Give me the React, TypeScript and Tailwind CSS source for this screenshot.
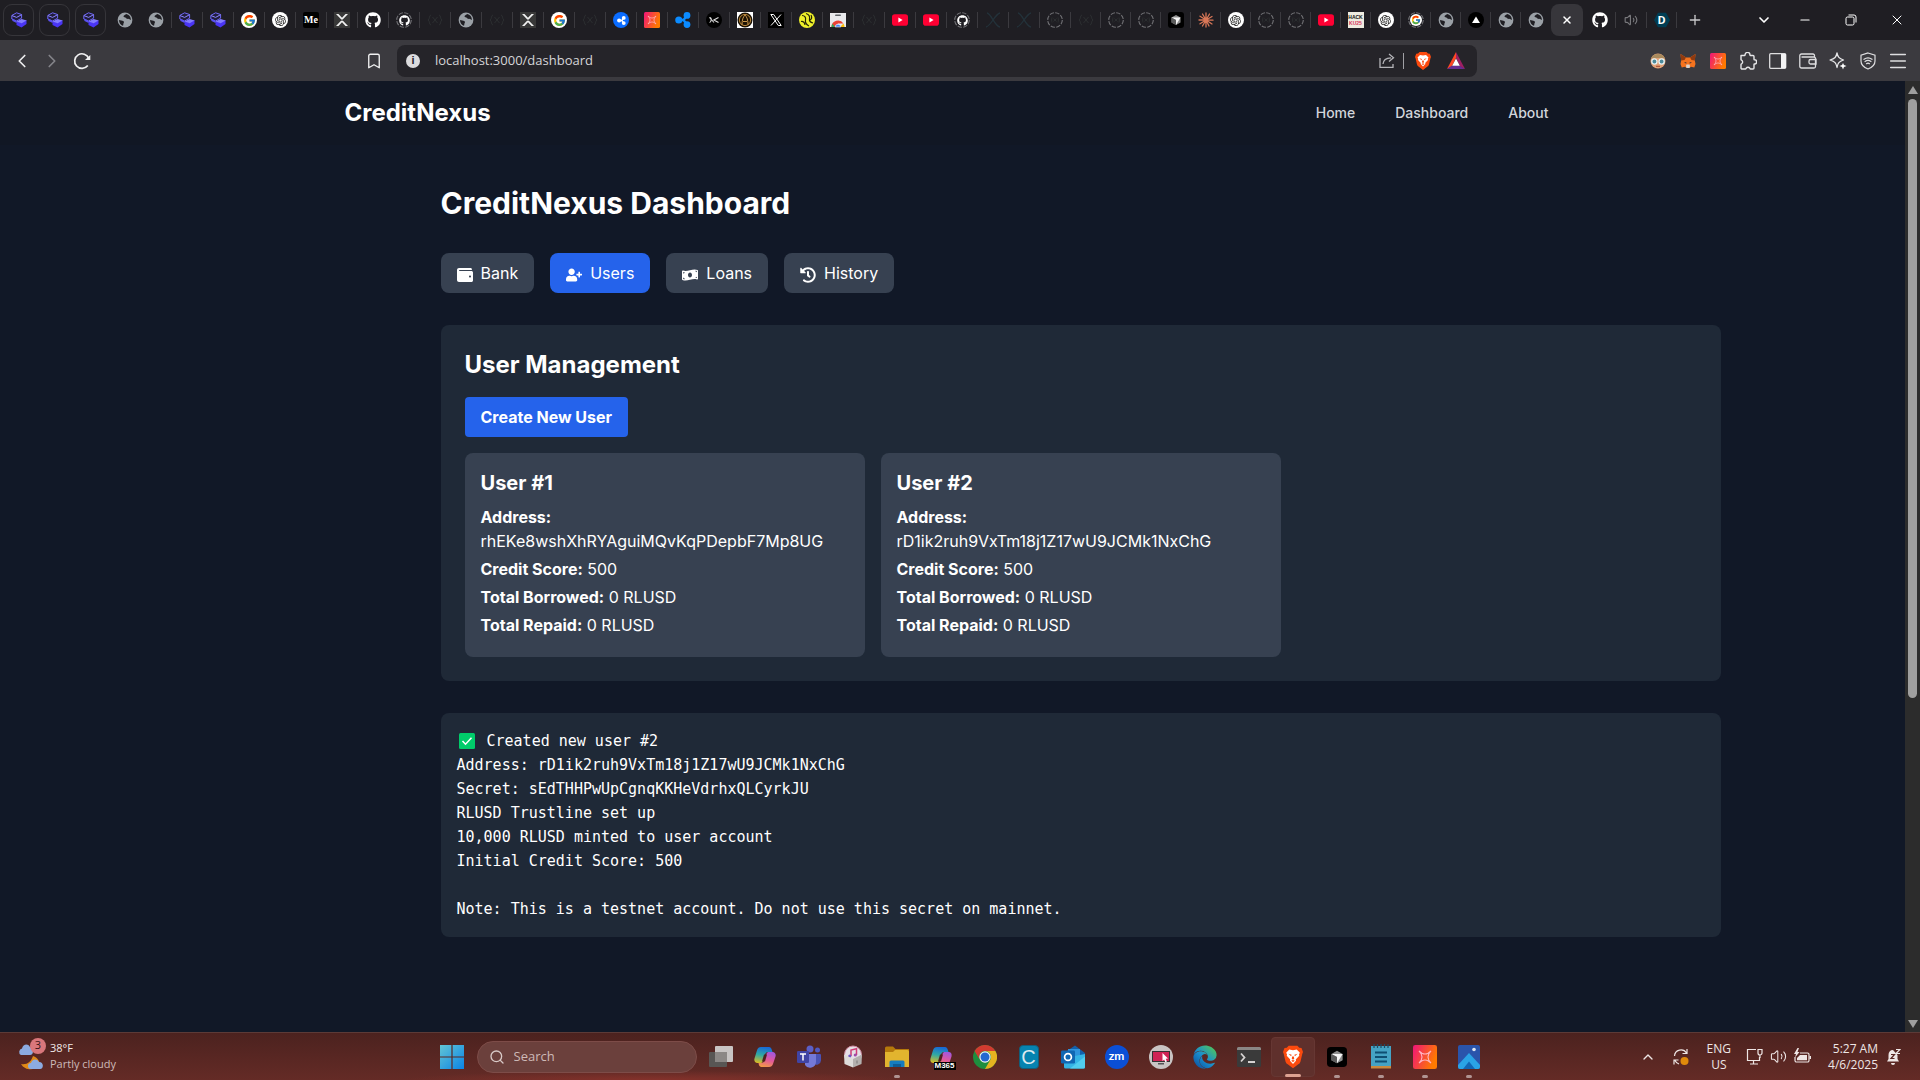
// App.tsx
import clsx from 'clsx';
import React, { useState } from 'react';
import {
  Bookmark,
  ChevronDown,
  ChevronLeft,
  ChevronRight,
  ChevronUp,
  Menu,
  Minus,
  Plus,
  Search,
  Volume2,
  X,
} from 'lucide-react';
import { FaEdge, FaGithub, FaHistory, FaMoneyBillWave, FaUserPlus, FaWallet } from 'react-icons/fa';
import { FcGoogle } from 'react-icons/fc';
import { RiOpenaiFill } from 'react-icons/ri';

type IconProps = { className?: string };

/* ---------- favicons ---------- */

const StackIcon = () => (
  <svg viewBox="0 0 16 16" className="h-4 w-4">
    <path d="M5.500 9 10 10.500 15.500 8v4L10.500 15.500 5.500 13z" fill="#4a35f5" />
    <path d="M5.500 9.500 10.600 7l5 1.500-5 2.800z" fill="#837cff" />
    <path d="M.8 3.400 5.600.8l5 1.700v3.700L5.600 9 .8 7z" fill="#211e3c" stroke="#6f68f5" strokeWidth="1" />
    <path d="m1 3.600 4.600 1.800 5-2.700" fill="none" stroke="#8c86ff" strokeWidth="1" />
    <path d="M.8 6.500 5.600 8.700v2.300L1.500 9z" fill="#5a50f0" />
  </svg>
);

const GlobeIcon = () => (
  <svg viewBox="0 0 16 16" className="h-4 w-4">
    <circle cx="8" cy="8" r="7.4" fill="#9aa0a6" />
    <path
      d="M9.2 1.9C8.4 3 7 2.8 6.600 4c-.3 1 .7 1.400 1.600 1.500 1 .1.700 1.100 1.800 1.300 1.600.2 2.600.3 3.900 1.200C14 4.700 12 2.500 9.200 1.900zM2 8c1.300.3 3.300.4 4.500 1.300 1 .8.2 1.600-.1 2.400-.3.9.200 1.400-.5 2.100C3.700 13 2 10.800 2 8z"
      fill="#1f1e23"
    />
  </svg>
);

const OpenAiIcon = () => (
  <span className="flex h-4 w-4 items-center justify-center rounded-full bg-white">
    <RiOpenaiFill size={13} color="#222" />
  </span>
);

const MediumIcon = () => (
  <span className="flex h-4 w-4 items-center justify-center rounded-xs bg-black font-['Liberation_Serif',serif] text-[10px] leading-4 font-bold text-white">
    Me
  </span>
);

const XSquareIcon = () => (
  <svg viewBox="0 0 16 16" className="h-4 w-4">
    <path d="M0 0h16v16H0z" fill="#383838" />
    <path d="M2 2h2.500L8 5.800 11.500 2H14L9.200 7.100c-.7.700-1.700.700-2.400 0zM2 14h2.500L8 10.200l3.500 3.800H14L9.200 8.900c-.7-.7-1.700-.7-2.400 0z" fill="#f1f1f1" />
  </svg>
);

// Tab that is still loading: a broken ring, with the site's icon small inside it
const Ring = ({ children }: { children?: React.ReactNode }) => (
  <span className="relative flex h-4 w-4 items-center justify-center">
    <svg viewBox="0 0 16 16" className="absolute inset-0" fill="none">
      <circle cx="8" cy="8" r="7.300" stroke="#727276" strokeWidth="1.100" strokeDasharray="4.400 1.330" />
      {!children && <path d="M5 5.500C4.500 7 4.500 9 5 10.500M11 5.500c.5 1.500.5 3.500 0 5M6.500 6.500l3 3M9.500 6.500l-3 3" stroke="#2c2f31" />}
    </svg>
    {children}
  </span>
);

const LoadingIcon = () => <Ring />;

const GithubRingIcon = () => (
  <Ring>
    <FaGithub size={11} color="#fff" className="relative" />
  </Ring>
);

const GoogleRingIcon = () => (
  <Ring>
    <span className="relative flex h-3 w-3 items-center justify-center rounded-full bg-white">
      <FcGoogle size={10} />
    </span>
  </Ring>
);

const GoogleIcon = () => (
  <span className="flex h-4 w-4 items-center justify-center rounded-full bg-white">
    <FcGoogle size={13} />
  </span>
);

const GithubIcon = () => <FaGithub size={16} color="#fff" />;

const BracesIcon = () => (
  <svg viewBox="0 0 16 16" className="h-4 w-4" fill="none" stroke="#2c2f31">
    <path d="M4 3C2 3 3 7 1 8c2 1 1 5 3 5M12 3c2 0 1 4 3 5-2 1-1 5-3 5M5.500 5l5 6M10.500 5l-5 6" />
  </svg>
);

const DarkXIcon = () => (
  <svg viewBox="0 0 16 16" className="h-4 w-4" fill="none" stroke="#23323a" strokeWidth="1.300">
    <path d="M2 1c4 0 8 14 13 14M15 1C10 2 6 14 1 15" />
  </svg>
);

const RippleMark = ({ className, fill }: IconProps & { fill: string }) => (
  <svg viewBox="0 0 16 16" className={className} fill={fill} stroke={fill}>
    <circle cx="3.800" cy="8" r="3.600" stroke="none" />
    <circle cx="12" cy="3.400" r="3.400" stroke="none" />
    <circle cx="12" cy="12.600" r="3.400" stroke="none" />
    <path d="M4 8h4.500L12 3.500M8.500 8l3.500 4.500" strokeWidth="2.400" fill="none" />
  </svg>
);

const RippleCircleIcon = () => (
  <span className="flex h-4 w-4 items-center justify-center rounded-full bg-[#0a6cff]">
    <RippleMark className="h-[9px] w-[9px]" fill="#fff" />
  </span>
);

const RippleIcon = () => <RippleMark className="h-4 w-4" fill="#0b8bff" />;

const CrossmarkIcon = ({ className = 'h-4 w-4' }: IconProps) => (
  <svg viewBox="0 0 32 32" className={className}>
    <defs>
      <linearGradient id="crossmark" x1="0" y1="0" x2="1" y2="0.400">
        <stop offset="0" stopColor="#f0147a" />
        <stop offset="1" stopColor="#ff7a00" />
      </linearGradient>
    </defs>
    <rect width="32" height="32" rx="3" fill="url(#crossmark)" />
    <path
      d="M8 8l4 3c2.500 1.300 5.500 1.300 8 0l4-3-3 4c-1.300 2.500-1.300 5.500 0 8l3 4-4-3c-2.500-1.300-5.500-1.300-8 0l-4 3 3-4c1.300-2.500 1.300-5.500 0-8z"
      fill="none"
      stroke="#ffb3c0"
      strokeWidth="1.500"
    />
  </svg>
);

const XcIcon = () => (
  <svg viewBox="0 0 16 16" className="h-4 w-4">
    <circle cx="8" cy="8" r="8" fill="#000" />
    <path d="M3.500 5.500c3 0 1.500 5 0 5M3.500 5.500 8 10.500M12.500 5.500 7.800 8l4.700 2.500" fill="none" stroke="#ddd" strokeWidth="1.100" />
  </svg>
);

const GoldIcon = () => (
  <svg viewBox="0 0 16 16" className="h-4 w-4">
    <path d="M0 0h16v16H0z" fill="#fff" />
    <circle cx="8" cy="8" r="7.500" fill="#1b1204" />
    <circle cx="8" cy="8" r="5.600" fill="none" stroke="#b9863a" />
    <path d="M5 13c0-5 1-8 3-10 2 2 3 5 3 10M6 9.500h4" fill="none" stroke="#c9954a" />
  </svg>
);

const TwitterXIcon = () => (
  <svg viewBox="0 0 16 16" className="h-4 w-4">
    <path d="M0 0h16v16H0z" fill="#000" />
    <path d="M2.800 2.500h2.900l7.500 11h-2.900zM13 2.500 3 13.500" fill="none" stroke="#fff" strokeWidth="1" />
  </svg>
);

const YellowIcon = () => (
  <svg viewBox="0 0 16 16" className="h-4 w-4">
    <circle cx="8" cy="8" r="8" fill="#eef02a" />
    <path d="M3 3.500c3 0 4 2 3.500 4.500S8 13 10 14M7 1.500c3 1 4 3 3.500 5.500S12 10.500 14 11M2 9.500c2-.5 3.500.5 4 3.500M12 3c1 2 1 4-1 5" fill="none" stroke="#252605" strokeWidth="1.200" />
  </svg>
);

const WebStoreIcon = () => (
  <svg viewBox="0 0 16 16" className="h-4 w-4">
    <path d="M0 1h16v14H0z" fill="#e9eaed" />
    <rect x="5" y="2.500" width="6" height="1.600" rx="0.800" fill="#5f6368" />
    <path d="M1.500 15a6.500 6.500 0 0 1 12-3.500H8L5.500 15z" fill="#ea4335" />
    <path d="M13.500 11.500A6.500 6.500 0 0 1 14.500 15H10z" fill="#fbbc04" />
    <path d="M1.500 15c0-1.200.3-2.300.9-3.200L5 15z" fill="#34a853" />
    <path d="M5.200 15a2.800 2.800 0 0 1 5.600 0z" fill="#4285f4" stroke="#fff" strokeWidth="0.600" />
  </svg>
);

const YoutubeIcon = () => (
  <svg viewBox="0 0 16 16" className="h-4 w-4">
    <rect y="2.300" width="16" height="11.400" rx="2.800" fill="#ff0033" />
    <path d="M6.400 5.500v5l4.200-2.500z" fill="#fff" />
  </svg>
);

const CursorIcon = ({ className = 'h-4 w-4' }: IconProps) => (
  <svg viewBox="0 0 16 16" className={className}>
    <rect width="16" height="16" rx="3" fill="#000" />
    <path d="m8 3 4.500 2.500v5L8 13l-4.500-2.500v-5z" fill="#8d8d8d" />
    <path d="M3.500 5.500h9L8 13V8z" fill="#f4f4f4" />
    <path d="m3.500 5.500 4.500 2.500v5l-4.500-2.500z" fill="#5b5b5b" />
  </svg>
);

const ClaudeIcon = () => (
  <svg viewBox="0 0 16 16" className="h-4 w-4" stroke="#d97757" strokeWidth="1.300" strokeLinecap="round">
    <path d="M8 8V1M8 8l3.500-6M8 8l6-3.500M8 8l7 .2M8 8l6 4M8 8l3 6M8 8v7M8 8l-3.500 6M8 8l-6 3.800M8 8H1M8 8 2 4.200M8 8 4.500 2" />
  </svg>
);

const HackIcon = () => (
  <span className="flex h-4 w-4 flex-col items-center justify-center bg-[#eeece0] font-['Liberation_Sans',sans-serif] text-[5px] leading-[6px] font-bold">
    <span className="text-[#111]">HACK</span>
    <span className="text-[#d7375a]">KU25</span>
  </span>
);

const VercelIcon = () => (
  <svg viewBox="0 0 16 16" className="h-4 w-4">
    <circle cx="8" cy="8" r="8" fill="#000" />
    <path d="m8 4.500 4 6.500H4z" fill="#fff" />
  </svg>
);

const DevpostIcon = () => (
  <span className="relative flex h-4 w-4 items-center justify-center font-['Open_Sans',sans-serif] text-[11px] font-bold text-white">
    <svg viewBox="0 0 16 16" className="absolute inset-0">
      <path d="M4 .8h8l4 7.200-4 7.200H4L0 8z" fill="#003e54" />
    </svg>
    <span className="relative">D</span>
  </span>
);

const SpeakerIcon = () => <Volume2 size={14} color="#78787c" strokeWidth={2} />;

const leadingTabs = [
  GlobeIcon, GlobeIcon, StackIcon, StackIcon, GoogleIcon, OpenAiIcon, MediumIcon, XSquareIcon,
  GithubIcon, GithubRingIcon, BracesIcon, GlobeIcon, BracesIcon, XSquareIcon, GoogleIcon, BracesIcon,
  RippleCircleIcon, CrossmarkIcon, RippleIcon, XcIcon, GoldIcon, TwitterXIcon, YellowIcon, WebStoreIcon,
  BracesIcon, YoutubeIcon, YoutubeIcon, GithubRingIcon, DarkXIcon, DarkXIcon, LoadingIcon,
];

const trailingTabs = [
  BracesIcon, LoadingIcon, LoadingIcon, CursorIcon, ClaudeIcon, OpenAiIcon, LoadingIcon, LoadingIcon,
  YoutubeIcon, HackIcon, OpenAiIcon, GoogleRingIcon, GlobeIcon, VercelIcon, GlobeIcon, GlobeIcon,
];

const Tab = ({ icon: Icon, className, divider = true }: { icon: React.ComponentType; className: string; divider?: boolean }) => (
  <button className={clsx('flex h-4 shrink-0 items-center justify-center border-r', divider ? 'border-[#3b3a3f]' : 'border-transparent', className)}>
    <Icon />
  </button>
);

const TabStrip = () => (
  <div className="flex h-10 shrink-0 items-center bg-[#1f1e23]">
    <div className="flex gap-[5px] pr-1 pl-[3px]">
      {[1, 2, 3].map((tab) => (
        <button key={tab} className="flex h-8 w-[31px] items-center justify-center rounded-[9px] border border-[#36353a]">
          <StackIcon />
        </button>
      ))}
    </div>
    {leadingTabs.map((icon, i) => (
      <Tab key={i} icon={icon} className="w-[31px]" divider={i > 0} />
    ))}
    {trailingTabs.map((icon, i) => (
      <Tab key={i} icon={icon} className="w-[30px]" divider={i < trailingTabs.length - 1} />
    ))}
    <button aria-label="Close tab" className="mr-[2px] flex h-8 w-8 shrink-0 items-center justify-center rounded-lg bg-[#37363b]">
      <X size={12} color="#fff" strokeWidth={3} />
    </button>
    <Tab icon={GithubIcon} className="w-[31px]" />
    <Tab icon={SpeakerIcon} className="w-[31px]" />
    <Tab icon={DevpostIcon} className="w-[30px]" />
    <button aria-label="New tab" className="flex w-9 shrink-0 justify-center text-[#c9c9cb]">
      <Plus size={16} strokeWidth={2} />
    </button>
    <div className="ml-auto flex items-center text-white">
      <button aria-label="Search tabs" className="flex w-9 justify-center">
        <ChevronDown size={16} strokeWidth={2.5} />
      </button>
      <button aria-label="Minimize" className="flex w-[46px] justify-center">
        <Minus size={14} strokeWidth={2} />
      </button>
      <button aria-label="Restore" className="flex w-[46px] justify-center">
        <svg viewBox="0 0 12 12" className="h-3 w-3" fill="none" stroke="currentColor">
          <rect x="1" y="3" width="8" height="8" rx="1.500" />
          <path d="M3.500 1H9a2 2 0 0 1 2 2v5.500" />
        </svg>
      </button>
      <button aria-label="Close" className="flex w-[46px] justify-center">
        <X size={16} strokeWidth={1.5} />
      </button>
    </div>
  </div>
);

/* ---------- toolbar ---------- */

const BraveIcon = ({ className }: IconProps) => (
  <svg viewBox="0 0 16 18" className={className}>
    <path d="m4.500 0h7l1.500 1.600 1.800.2L16 5l-.6 1.500L14 12.500c-.3 1-.8 1.600-1.500 2.100L8 18l-4.500-3.400C2.800 14.100 2.300 13.500 2 12.500L.6 6.500 0 5l1.200-3.200 1.800-.2z" fill="#fb4a0e" />
    <path d="m5 3 3 .6L11 3l2.500 2.500-.7 1.300.2 1.200-2.800 3 .2 1L8 14.500 5.600 12l.2-1L3 8l.2-1.200-.7-1.300z" fill="#fff" />
    <path d="M4.300 6.300l2.600.8-.4 1.200zM11.700 6.300l-2.600.8.4 1.200zM7.300 8.500h1.400L9 10.300l-1 .8-1-.8zM6.500 12l1.500-.7 1.500.7L8 13z" fill="#fb4a0e" />
  </svg>
);

const BatIcon = () => (
  <svg viewBox="0 0 18 18" className="h-[18px] w-[18px]">
    <path d="M9 0 0 17l5-3 4-8z" fill="#ff4724" />
    <path d="m0 17 5-3.500h8L18 17z" fill="#662d91" />
    <path d="m9 0 9 17-5-3-4-8z" fill="#9e1f63" />
    <path d="m9 6.500 3.800 7.200H5.200z" fill="#fff" />
  </svg>
);

const NerdIcon = () => (
  <svg viewBox="0 0 16 16" className="h-4 w-4">
    <circle cx="8" cy="8" r="7.500" fill="#e2a277" />
    <path d="M.8 6.500a7.500 7.500 0 0 1 14.400 0L13 5H3z" fill="#a98a5d" />
    <circle cx="4.400" cy="8.500" r="2.600" fill="#4c8b9c" stroke="#e7f3f5" strokeWidth="1.300" />
    <circle cx="11.600" cy="8.500" r="2.600" fill="#4c8b9c" stroke="#e7f3f5" strokeWidth="1.300" />
    <path d="M6 13.300h4" stroke="#a3472f" />
  </svg>
);

const FoxIcon = () => (
  <svg viewBox="0 0 16 16" className="h-4 w-4">
    <path d="m.5 1 5.500 3.500h4L15.500 1l-.7 6.500L15.500 11l-1.200 3.500-3.300-.8L9.500 15h-3L5 13.700l-3.300.8L.5 11l.7-3.500z" fill="#f5731f" />
    <path d="M.5 1 6 4.500 4.500 7l-3.300.5zM15.500 1 10 4.500 11.500 7l3.300.5z" fill="#8f3a10" />
    <path d="m6 13 .5-1.500h3L10 13l-.5 2h-3z" fill="#d8d4d0" />
    <path d="m4 9 2.500.5-.3 1.200zM12 9l-2.500.5.3 1.200z" fill="#2a2f3a" />
  </svg>
);

const ExtensionsIcon = () => (
  <svg viewBox="0 0 18 18" className="h-[18px] w-[18px]" fill="none" stroke="#e6e6e8" strokeWidth="1.400" strokeLinejoin="round">
    <path d="M2 3.500h3.500c.3 0 .5-.3.500-.6a2.500 2.500 0 0 1 5 0c0 .3.200.6.500.6H14a1 1 0 0 1 1 1v2.800c0 .3.200.5.500.5a2 2 0 0 1 0 4.200c-.3 0-.5.2-.5.500V16a1 1 0 0 1-1 1h-2.500c-.4 0-.5-.4-.7-.8a2.200 2.200 0 0 0-3.600 0c-.2.400-.3.800-.7.800H3a1 1 0 0 1-1-1v-3.500c0-.4.300-.5.700-.7a2.200 2.200 0 0 0 0-3.600C2.300 8 2 7.900 2 7.500z" />
  </svg>
);

const SidebarIcon = () => (
  <svg viewBox="0 0 18 16" className="h-4 w-[18px]">
    <rect x="0.700" y="0.700" width="16" height="14.600" rx="1" fill="none" stroke="#dedee0" strokeWidth="1.300" />
    <path d="M12 1h5v14h-5z" fill="#f2f2f3" />
  </svg>
);

const WalletIcon = () => (
  <svg viewBox="0 0 18 16" className="h-4 w-[18px]" fill="none" stroke="#dedee0" strokeWidth="1.300">
    <path d="M15.500 4V2.500A1.500 1.500 0 0 0 14 1H2.500A1.700 1.700 0 0 0 .8 2.700v10.600A1.700 1.700 0 0 0 2.500 15H15a1.500 1.500 0 0 0 1.500-1.500v-8A1.500 1.500 0 0 0 15 4H2.500" />
    <path d="M17 6.500h-5.500A1.500 1.500 0 0 0 10 8v1.500a1.500 1.500 0 0 0 1.500 1.500H17z" />
  </svg>
);

const LeoIcon = () => (
  <svg viewBox="0 0 18 18" className="h-[18px] w-[18px]">
    <path d="M8 1c.8 4 2 5.500 6.500 7-4.500 1.500-5.700 3-6.500 7.500C7.200 11 6 9.500 1 8c5-1.500 6.200-3 7-7z" fill="none" stroke="#e6e6e8" strokeWidth="1.300" strokeLinejoin="round" />
    <path d="m14 11 1 2 2.500 1-2.500 1-1 2.500-1-2.500-2.500-1 2.500-1z" fill="#fff" />
  </svg>
);

const VpnIcon = () => (
  <svg viewBox="0 0 16 18" className="h-[18px] w-4" fill="none" stroke="#dedee0" strokeWidth="1.200" strokeLinecap="round">
    <path d="M8 1 15 3.300V9c0 4-3 6.500-7 8-4-1.500-7-4-7-8V3.300z" />
    <path d="M4 7.300c2.500-1.800 5.500-1.800 8 0M5 9.500c2-1.400 4-1.400 6 0M6.500 11.700c1-.7 2-.7 3 0" />
  </svg>
);

const toolbarActions = [
  { label: 'Profile', icon: <NerdIcon /> },
  { label: 'MetaMask', icon: <FoxIcon /> },
  { label: 'Crossmark', icon: <CrossmarkIcon /> },
  { label: 'Extensions', icon: <ExtensionsIcon /> },
  { label: 'Sidebar', icon: <SidebarIcon /> },
  { label: 'Wallet', icon: <WalletIcon /> },
  { label: 'Leo AI', icon: <LeoIcon /> },
  { label: 'VPN', icon: <VpnIcon /> },
  { label: 'Menu', icon: <Menu size={22} color="#dedee0" strokeWidth={1.6} /> },
];

const Toolbar = () => (
  <div className="flex h-[41px] shrink-0 items-center bg-[#3b3a3f]">
    <div className="flex w-[397px] items-center pl-[7px] text-[#f0f0f1]">
      <button aria-label="Back" className="flex w-[30px] justify-center">
        <ChevronLeft size={22} strokeWidth={1.8} />
      </button>
      <button aria-label="Forward" className="flex w-[30px] justify-center text-[#85858a]">
        <ChevronRight size={22} strokeWidth={1.8} />
      </button>
      <button aria-label="Reload" className="flex w-[30px] justify-center">
        <svg viewBox="0 0 18 18" className="h-[18px] w-[18px]" fill="none" stroke="currentColor" strokeWidth="1.700">
          <path d="M14.800 13.500A7.300 7.300 0 1 1 15.800 6.500" />
          <path d="M12 8h5.300V3z" fill="currentColor" stroke="none" />
        </svg>
      </button>
      <button aria-label="Bookmark this page" className="mr-2 ml-auto flex w-[30px] justify-center">
        <Bookmark size={18} strokeWidth={1.8} />
      </button>
    </div>
    <div className="flex h-8 flex-1 items-center rounded-lg bg-[#252429] pr-3 pl-[9px]">
      <span className="flex h-3.5 w-3.5 items-center justify-center rounded-full bg-[#dcdcde] font-['Liberation_Sans',sans-serif] text-[11px] font-bold text-[#252429]">
        i
      </span>
      <input
        aria-label="Address"
        defaultValue="localhost:3000/dashboard"
        className="ml-[15px] flex-1 bg-transparent font-['Open_Sans',sans-serif] text-[13px] text-[#d5d5d8] outline-none"
      />
      <button aria-label="Share" className="mr-2">
        <svg viewBox="0 0 16 16" className="h-4 w-4" fill="none" stroke="#b4b4b8" strokeWidth="1.300">
          <path d="M1 5v9.300h13V11M4 11c.3-4 3-6 8-6.200M10 1l4.500 3.800L10 8.500" />
        </svg>
      </button>
      <span className="h-4 w-px bg-[#a0a0a5]" />
      <button aria-label="Brave Shields" className="flex w-[38px] justify-center">
        <BraveIcon className="h-[18px] w-4" />
      </button>
      <button aria-label="Brave Rewards" className="ml-[5px]">
        <BatIcon />
      </button>
    </div>
    <div className="flex w-[443px] justify-end pr-[7px]">
      {toolbarActions.map(({ label, icon }) => (
        <button key={label} aria-label={label} className="flex w-[30px] items-center justify-center">
          {icon}
        </button>
      ))}
    </div>
  </div>
);

/* ---------- dashboard ---------- */

const sections = [
  { id: 'bank', label: 'Bank', icon: FaWallet },
  { id: 'users', label: 'Users', icon: FaUserPlus },
  { id: 'loans', label: 'Loans', icon: FaMoneyBillWave },
  { id: 'history', label: 'History', icon: FaHistory },
];

const users = [
  { id: 1, address: 'rhEKe8wshXhRYAguiMQvKqPDepbF7Mp8UG', score: 500, borrowed: 0, repaid: 0 },
  { id: 2, address: 'rD1ik2ruh9VxTm18j1Z17wU9JCMk1NxChG', score: 500, borrowed: 0, repaid: 0 },
];

const logLines = `Address: rD1ik2ruh9VxTm18j1Z17wU9JCMk1NxChG
Secret: sEdTHHPwUpCgnqKKHeVdrhxQLCyrkJU
RLUSD Trustline set up
10,000 RLUSD minted to user account
Initial Credit Score: 500

Note: This is a testnet account. Do not use this secret on mainnet.`;

const NavBar = () => (
  <nav className="bg-[#111724]">
    <div className="mx-auto flex h-16 max-w-7xl items-center justify-between px-8">
      <a href="#home" className="text-2xl font-bold text-white">
        CreditNexus
      </a>
      <div className="flex space-x-4 text-sm font-medium text-[#d1d5db]">
        <a href="#home" className="px-3 py-2">Home</a>
        <a href="#dashboard" className="px-3 py-2">Dashboard</a>
        <a href="#about" className="px-3 py-2">About</a>
      </div>
    </div>
  </nav>
);

const UserCard = ({ user }: { user: (typeof users)[number] }) => (
  <div className="rounded-lg bg-[#374151] p-4">
    <h3 className="mb-2 text-xl font-bold">User #{user.id}</h3>
    <p className="mb-1">
      <strong>Address:</strong> {user.address}
    </p>
    <p className="mb-1">
      <strong>Credit Score:</strong> {user.score}
    </p>
    <p className="mb-1">
      <strong>Total Borrowed:</strong> {user.borrowed} RLUSD
    </p>
    <p className="mb-1">
      <strong>Total Repaid:</strong> {user.repaid} RLUSD
    </p>
  </div>
);

const Dashboard = () => {
  const [active, setActive] = useState('users');

  return (
    <div className="min-w-0 flex-1 overflow-hidden bg-[#111827] font-['Inter',sans-serif] text-white">
      <NavBar />
      <main className="pt-10 pl-64">
        <div className="mx-auto max-w-7xl">
          <h1 className="mb-8 text-3xl leading-9 font-bold">CreditNexus Dashboard</h1>

          <div className="mb-8 flex gap-4">
            {sections.map(({ id, label, icon: Icon }) => (
              <button
                key={id}
                onClick={() => setActive(id)}
                className={clsx('rounded-lg px-4 py-2', active === id ? 'bg-[#2563eb]' : 'bg-[#374151]')}
              >
                <Icon className="mr-2 inline" />
                {label}
              </button>
            ))}
          </div>

          <section className="mb-8 rounded-lg bg-[#1f2937] p-6">
            <h2 className="mb-4 text-2xl font-bold">User Management</h2>
            <button className="mb-4 rounded-sm bg-[#2563eb] px-4 py-2 font-bold">Create New User</button>
            <div className="grid grid-cols-3 gap-4">
              {users.map((user) => (
                <UserCard key={user.id} user={user} />
              ))}
            </div>
          </section>

          <pre className="rounded-lg bg-[#1f2937] p-4 font-['DejaVu_Sans_Mono',monospace] text-[15px] leading-6">
            <span className="flex items-center gap-3">
              <svg viewBox="0 0 16 16" role="img" aria-label="Done" className="ml-[2px] h-4 w-4">
                <rect width="16" height="16" rx="1.500" fill="#00cc6a" />
                <path d="m3.500 8 3 3.200 6-6.400" fill="none" stroke="#fff" strokeWidth="1.500" />
              </svg>
              Created new user #2
            </span>
            {logLines}
          </pre>
        </div>
      </main>
    </div>
  );
};

const ScrollTrack = () => (
  <div className="flex w-[15px] shrink-0 flex-col items-center bg-[#2c2c2c] py-1">
    <svg viewBox="0 0 10 8" className="mt-[1px] h-2 w-2.5">
      <path d="M5 0 10 8H0z" fill="#9f9f9f" />
    </svg>
    <div className="w-[9px] flex-1 pt-[5px]">
      <div className="h-[65%] rounded-full bg-[#9f9f9f]" />
    </div>
    <svg viewBox="0 0 10 8" className="h-2 w-2.5">
      <path d="M0 0h10L5 8z" fill="#9f9f9f" />
    </svg>
  </div>
);

/* ---------- taskbar ---------- */

const WindowsIcon = () => (
  <svg viewBox="0 0 24 24" className="h-6 w-6">
    <defs>
      <linearGradient id="win" x1="0" y1="0" x2="1" y2="1">
        <stop offset="0" stopColor="#63c5d4" />
        <stop offset="1" stopColor="#0a84e6" />
      </linearGradient>
    </defs>
    <path d="M0 0h11.400v11.400H0zM12.600 0H24v11.400H12.600zM0 12.600h11.400V24H0zM12.600 12.600H24V24H12.600z" fill="url(#win)" />
  </svg>
);

const TaskViewIcon = () => (
  <svg viewBox="0 0 24 24" className="h-6 w-6">
    <rect x="6" y="1" width="18" height="16" rx="1" fill="#c9c5c4" />
    <rect y="7" width="18" height="15" rx="1" fill="#585654" />
    <path d="M6 7h12v10H6z" fill="#8c8886" />
  </svg>
);

const CopilotIcon = () => (
  <svg viewBox="0 0 24 24" className="h-6 w-6">
    <defs>
      <linearGradient id="copilotA" x1="0.500" y1="0" x2="0.300" y2="1">
        <stop offset="0" stopColor="#1769d8" />
        <stop offset="0.500" stopColor="#2fa9a4" />
        <stop offset="1" stopColor="#d9bb25" />
      </linearGradient>
      <linearGradient id="copilotB" x1="0.600" y1="0" x2="0.300" y2="1">
        <stop offset="0" stopColor="#a457dc" />
        <stop offset="0.500" stopColor="#e2589a" />
        <stop offset="1" stopColor="#f39a45" />
      </linearGradient>
    </defs>
    <path d="M8 2h8c1.500 0 2.300 1 2.700 2.500L19.500 7H15c-1.700 0-2.500 1-3 2.600L10 16c-.5 1.500-1.300 2-2.700 2H4.500C2 18 .8 16 1.500 13.500l2.600-8.500C4.800 3 6 2 8 2z" fill="url(#copilotA)" />
    <path d="M16 22H8.500c-1.500 0-2.300-1-2.700-2.500L5.500 18H8c1.700 0 2.800-.8 3.300-2.600L13.500 9c.5-1.400 1.200-2 2.500-2h3.500c2.500 0 3.700 2 3 4.500L20 19c-.7 2-2 3-4 3z" fill="url(#copilotB)" />
    <path d="m11 9.500-2 7h3l2-7z" fill="#4e211f" />
  </svg>
);

const TeamsIcon = () => (
  <svg viewBox="0 0 24 24" className="h-6 w-6">
    <circle cx="13" cy="4" r="3.500" fill="#5b5fc7" />
    <circle cx="20.500" cy="5" r="2.500" fill="#5058c0" />
    <path d="M16 9h7a1 1 0 0 1 1 1v5a4.500 4.500 0 0 1-8 3z" fill="#4a52b4" />
    <path d="M8 9h11v8a6 6 0 0 1-11 3z" fill="#7479d8" />
    <rect y="6" width="12" height="12" rx="1.300" fill="#4044a4" />
    <path d="M3 9h6M6 9v6.500" stroke="#fff" strokeWidth="1.500" />
  </svg>
);

const ItunesIcon = () => (
  <svg viewBox="0 0 24 24" className="h-6 w-6">
    <circle cx="12" cy="9.500" r="8.500" fill="#e6dfe6" stroke="#cd8aa0" />
    <path d="M10 11V5l5.500-1.200V10" fill="none" stroke="#cf3d78" strokeWidth="1.500" />
    <circle cx="8.800" cy="11" r="1.600" fill="#7057c4" />
    <circle cx="14.300" cy="10" r="1.600" fill="#a04aa8" />
    <path d="m3 9.500 9 4.500v8.500L3.500 19z" fill="#dddbd9" />
    <path d="m12 14 9-4.500-.5 9.500-8.500 3.500z" fill="#b3b0ae" />
    <path d="M16 15.500v3" stroke="#8d8a88" strokeWidth="1.500" />
  </svg>
);

const FolderIcon = () => (
  <svg viewBox="0 0 24 24" className="h-6 w-6">
    <path d="M0 3a1.500 1.500 0 0 1 1.500-1.500H8L10.500 4H24v5H0z" fill="#b5790b" />
    <path d="M0 7h8l2-2h12.500A1.500 1.500 0 0 1 24 6.500V22H0z" fill="#e2b42e" />
    <path d="M4.500 22v-5A1.500 1.500 0 0 1 6 15.500h12a1.500 1.500 0 0 1 1.500 1.500v5z" fill="#147cc0" />
    <path d="M8 19h8v3H8z" fill="#0d5c97" />
  </svg>
);

const M365Icon = () => (
  <span className="relative">
    <CopilotIcon />
    <span className="absolute top-[17px] left-[5px] bg-black px-[1px] font-['Liberation_Sans',sans-serif] text-[8px] leading-2 font-bold text-white">
      M365
    </span>
  </span>
);

const ChromeIcon = () => (
  <svg viewBox="0 0 24 24" className="h-6 w-6">
    <circle cx="12" cy="12" r="12" fill="#1e8e3e" />
    <path d="M1.600 6A12 12 0 0 1 22.400 6H12a6 6 0 0 0-5.200 9z" fill="#d23b30" />
    <path d="M22.400 6A12 12 0 0 1 12 24l5.200-9A6 6 0 0 0 12 6z" fill="#e5b320" />
    <circle cx="12" cy="12" r="5.700" fill="#f2f2f2" />
    <circle cx="12" cy="12" r="4.500" fill="#2468cf" />
  </svg>
);

const CIcon = () => (
  <span className="flex h-6 w-5 items-center justify-center rounded-sm border border-[#135d7a] bg-[#0683b0] font-['Liberation_Sans',sans-serif] text-[20px] leading-5 text-[#dbe9ee]">
    C
  </span>
);

const OutlookIcon = () => (
  <svg viewBox="0 0 24 24" className="h-6 w-6">
    <path d="m3 8 11-7.500L24 8v4H3z" fill="#1260ab" />
    <path d="M7 4h12v12H7z" fill="#2e93dc" />
    <path d="M3 13 24 9v13a1.500 1.500 0 0 1-1.500 1.500h-18A1.500 1.500 0 0 1 3 22z" fill="#35b4e5" />
    <path d="m9 23.500 15-12V22a1.500 1.500 0 0 1-1.500 1.500z" fill="#51cdee" />
    <rect y="5.500" width="14" height="13" rx="1.300" fill="#1067b3" />
    <circle cx="7" cy="12" r="3.400" fill="none" stroke="#fff" strokeWidth="1.700" />
  </svg>
);

const ZoomIcon = () => (
  <span className="flex h-6 w-6 items-center justify-center rounded-full bg-[#0b4fd6] pb-[2px] font-['Lato',sans-serif] text-[12px] font-bold text-white">
    zm
  </span>
);

const RecorderIcon = () => (
  <svg viewBox="0 0 24 24" className="h-6 w-6">
    <circle cx="12" cy="12" r="12" fill="#c9c4c3" />
    <path d="M3 6h18v11H3z" fill="#333" />
    <path d="M4 7h16v9H4z" fill="#cf2455" />
    <path d="M9 18h6v1.500H9z" fill="#555" />
    <path d="m13.500 8 5.500 5.500-2.300.2 1.200 2.800-1.500.7-1.300-2.800-1.600 1.600z" fill="#fff" />
  </svg>
);

const EdgeIcon = () => (
  <>
    <svg className="absolute h-0 w-0">
      <defs>
        <linearGradient id="edge" x1="0.100" y1="1" x2="0.900" y2="0.100">
          <stop offset="0" stopColor="#0c4f9e" />
          <stop offset="0.500" stopColor="#1a8fce" />
          <stop offset="1" stopColor="#4dc35f" />
        </linearGradient>
      </defs>
    </svg>
    <FaEdge size={24} fill="url(#edge)" />
  </>
);

const TerminalIcon = () => (
  <svg viewBox="0 0 24 24" className="h-6 w-6">
    <rect y="2" width="24" height="20" rx="1.500" fill="#3a3a3a" />
    <path d="M0 5V3.500A1.500 1.500 0 0 1 1.500 2h21A1.500 1.500 0 0 1 24 3.500V5z" fill="#8b8786" />
    <path d="m4 8.500 3.500 4L4 16.500M11 17h7" fill="none" stroke="#d5d2d1" strokeWidth="1.800" />
  </svg>
);

const NotepadIcon = () => (
  <svg viewBox="0 0 20 26" className="h-[26px] w-5">
    <path d="M0 2h20v20H0z" fill="#45a3c4" />
    <path d="M0 22h20v2.500H0z" fill="#c98a3f" />
    <path d="M3 0v4M6.500 0v4M10 0v4M13.500 0v4M17 0v4" stroke="#1d4c66" strokeWidth="1.200" />
    <path d="M4 8.500h12M4 13h12M4 17.500h12" stroke="#0f4f72" strokeWidth="1.800" />
  </svg>
);

const PhotosIcon = () => (
  <svg viewBox="0 0 24 24" className="h-6 w-6">
    <rect x="1" width="22" height="24" rx="2" fill="#2a54ab" />
    <path d="M1 20 12 8l11 12v2a2 2 0 0 1-2 2H3a2 2 0 0 1-2-2z" fill="#2aa3e6" />
    <path d="m6 24 6-7.500 6 7.500z" fill="#1266b5" />
    <circle cx="17" cy="4.500" r="1.800" fill="#dfe6f2" />
  </svg>
);

const taskbarApps = [
  { label: 'Task View', icon: <TaskViewIcon /> },
  { label: 'Copilot', icon: <CopilotIcon /> },
  { label: 'Teams', icon: <TeamsIcon /> },
  { label: 'iTunes Installer', icon: <ItunesIcon /> },
  { label: 'File Explorer', icon: <FolderIcon />, open: true },
  { label: 'Microsoft 365', icon: <M365Icon /> },
  { label: 'Chrome', icon: <ChromeIcon /> },
  { label: 'Clipchamp', icon: <CIcon /> },
  { label: 'Outlook', icon: <OutlookIcon /> },
  { label: 'Zoom', icon: <ZoomIcon /> },
  { label: 'Screen Recorder', icon: <RecorderIcon /> },
  { label: 'Edge', icon: <EdgeIcon /> },
  { label: 'Terminal', icon: <TerminalIcon /> },
  { label: 'Brave', icon: <BraveIcon className="h-6 w-5" />, active: true },
  { label: 'Cursor', icon: <CursorIcon className="h-5 w-5" />, open: true },
  { label: 'Notepad', icon: <NotepadIcon />, open: true },
  { label: 'Crossmark', icon: <CrossmarkIcon className="h-6 w-6" />, open: true },
  { label: 'Photos', icon: <PhotosIcon />, open: true },
];

const Weather = () => (
  <button className="flex items-center gap-1 pl-[18px] text-left">
    <span className="relative mb-1 h-10 w-7">
      <svg viewBox="0 0 28 40" className="h-10 w-7">
        <path d="M3 29c6 1 10-2 12-8 5 2 8 6 6 11-5 3-14 4-18-3z" fill="#e08a17" />
        <path d="M3 20a3.500 3.500 0 0 1 1-6.500C5 9 10 8 12 12c4 1 4 8 0 8z" fill="#8cabe0" />
        <path d="M13 34a3 3 0 0 1 0-6c1-4 6-5 8-1 5 0 5 7 1 7z" fill="#8cabe0" />
      </svg>
      <span className="absolute top-[3px] left-3 flex h-4 w-4 items-center justify-center rounded-full bg-[#d9777c] text-[11px] text-[#3a1417]">3</span>
    </span>
    <span className="flex flex-col pb-[2px] text-[11px] leading-4">
      <span className="text-[#f1e9e8]">38°F</span>
      <span className="text-[#cdbab8]">Partly cloudy</span>
    </span>
  </button>
);

const Tray = () => (
  <div className="flex items-center justify-end pr-[19px] text-[#eee6e5]">
    <button aria-label="Show hidden icons" className="mr-4">
      <ChevronUp size={16} strokeWidth={2} />
    </button>
    <button aria-label="Windows Update" className="mr-[17px]">
      <svg viewBox="0 0 18 18" className="h-[18px] w-[18px]" fill="none" stroke="currentColor" strokeWidth="1.200">
        <path d="M2.500 8A6.500 6.500 0 0 1 14.500 5M15 1v4.500h-4.500M7 16a6.500 6.500 0 0 1-4-3.500M2 16.500V12h4.500" />
        <circle cx="12.500" cy="13" r="4" fill="#e08a0b" stroke="none" />
      </svg>
    </button>
    <button className="mr-[15px] text-center text-[12px] leading-4">
      ENG
      <br />
      US
    </button>
    <button aria-label="Network, volume and battery" className="mr-[17px] flex items-center gap-[7px]">
      <svg viewBox="0 0 17 17" className="h-[17px] w-[17px]" fill="none" stroke="currentColor" strokeWidth="1.200">
        <path d="M10 1.500H1.500v11h12V9M7.500 12.500V16M4 16h8" />
        <path d="M12 1.500h4V5a2 2 0 0 1-4 0zM14 7v3" />
      </svg>
      <Volume2 size={17} strokeWidth={1.5} />
      <svg viewBox="0 0 17 17" className="h-[17px] w-[17px]">
        <path d="M6 5h7.500A1.500 1.500 0 0 1 15 6.500v6a1.500 1.500 0 0 1-1.500 1.500h-11A1.500 1.500 0 0 1 1 12.500V9" fill="none" stroke="currentColor" strokeWidth="1.200" />
        <path d="M6 7h7v5.200H3V10zM15.500 8H17v3h-1.500zM3.500 0 0 6h2L1 9.500 5.500 4h-2L5 0z" fill="currentColor" />
      </svg>
    </button>
    <button className="mr-2 text-right text-[12px] leading-4">
      5:27 AM
      <br />
      4/6/2025
    </button>
    <svg viewBox="0 0 15 18" className="h-[18px] w-[15px]">
      <path d="M7 2C4 2 2.500 4 2.500 7v4L1 13.500h12L11.500 11V7" fill="currentColor" />
      <path d="M5 15h4a2 2 0 0 1-4 0z" fill="currentColor" />
      <path d="M5 6.500h3.500L5 10.500h3.500" fill="none" stroke="#5a2723" strokeWidth="1.200" />
      <path d="M10 1.500h4l-4 4h4" fill="none" stroke="currentColor" strokeWidth="1.200" />
    </svg>
  </div>
);

const Taskbar = () => (
  <footer className="grid h-12 shrink-0 grid-cols-[1fr_auto_1fr] border-t border-[#5c3a37] bg-[radial-gradient(ellipse_at_34%_100%,#84322b_0%,transparent_14%),linear-gradient(#4c221f,#642b26)] font-['Open_Sans',sans-serif]">
    <Weather />
    <div className="flex items-center">
      <button aria-label="Start" className="flex w-11 justify-center">
        <WindowsIcon />
      </button>
      <label className="mr-[2px] ml-[3px] flex h-8 w-[220px] items-center gap-[9px] rounded-full border border-[#7d4c48] bg-[#6b403c] pl-[11px] text-[#d8c9c7]">
        <Search size={16} strokeWidth={2} />
        <input type="text" aria-label="Search" placeholder="Search" className="w-40 bg-transparent text-[13px] outline-none placeholder:text-[#cdb9b7]" />
      </label>
      {taskbarApps.map(({ label, icon, open, active }) => (
        <button
          key={label}
          aria-label={label}
          className={clsx('relative flex h-10 w-11 items-center justify-center rounded-sm', active && 'border border-[#663733] bg-[#5f302c]')}
        >
          {icon}
          {open && <span className="absolute -bottom-px h-[3px] w-1.5 rounded-full bg-[#b09492]" />}
          {active && <span className="absolute -bottom-px h-[3px] w-4 rounded-full bg-[#dda292]" />}
        </button>
      ))}
    </div>
    <Tray />
  </footer>
);

const App = () => (
  <div className="flex h-screen flex-col overflow-hidden">
    <TabStrip />
    <Toolbar />
    <div className="flex min-h-0 flex-1">
      <Dashboard />
      <ScrollTrack />
    </div>
    <Taskbar />
  </div>
);

export default App;
